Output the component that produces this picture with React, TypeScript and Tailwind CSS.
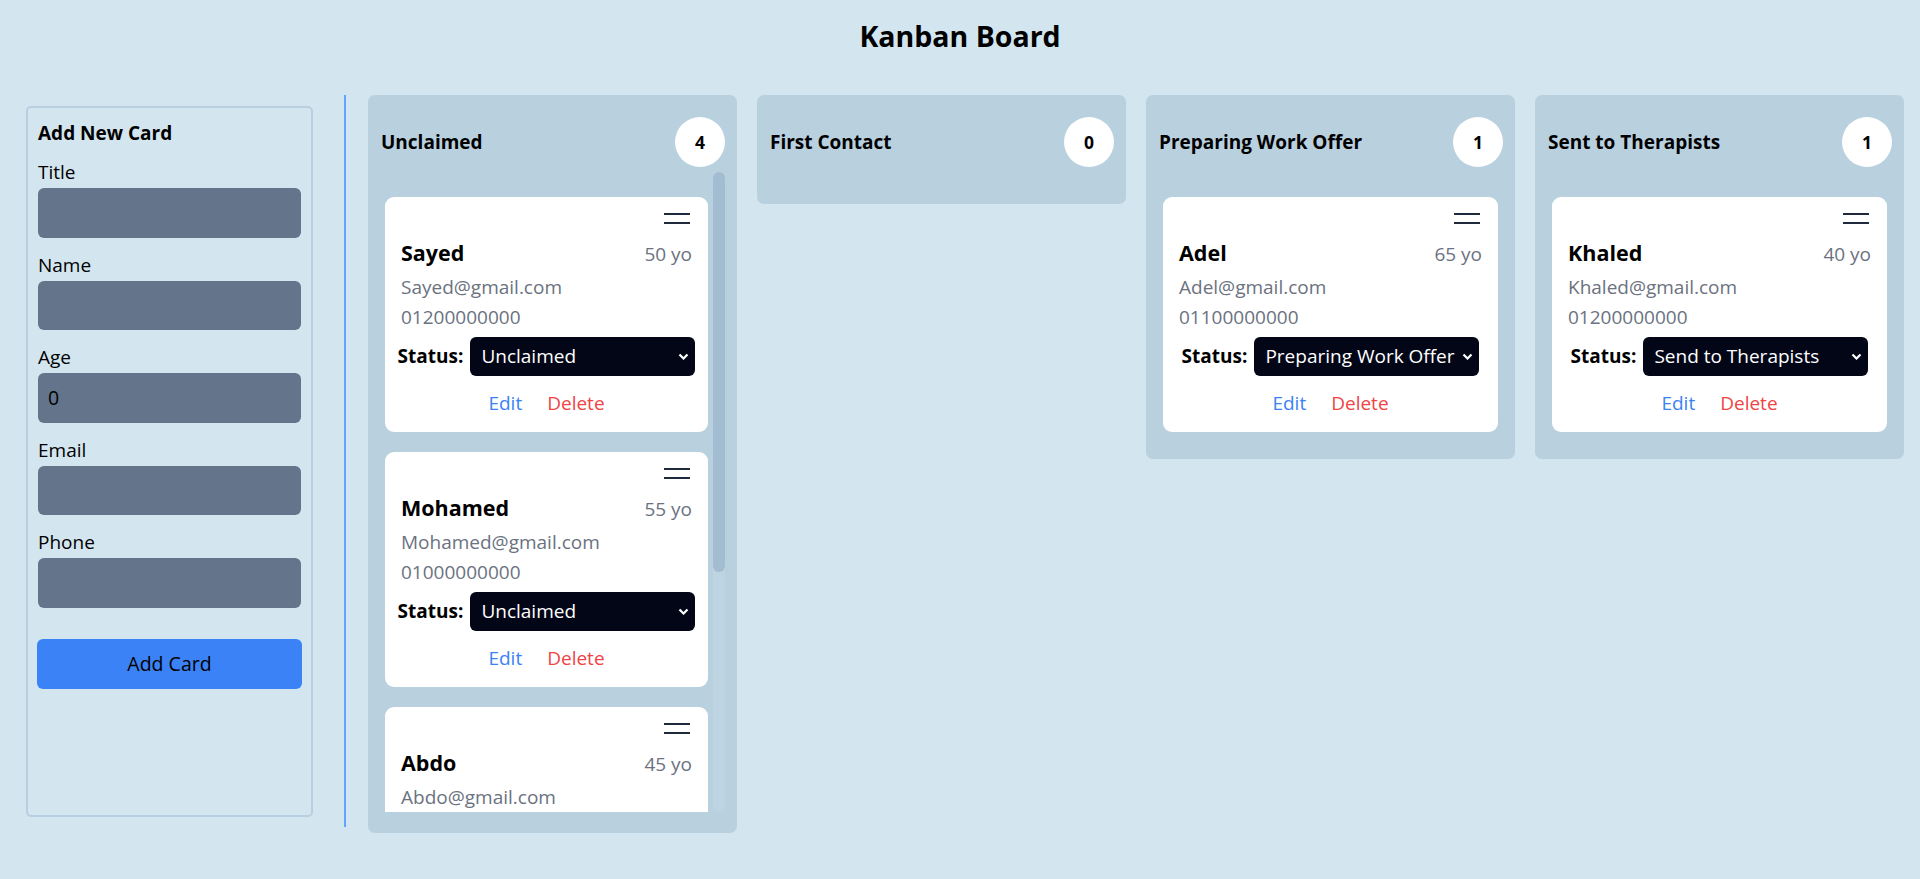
import React from "react";

type Card = {
  name: string;
  age: number;
  email: string;
  phone: string;
  status: string;
};

type Column = {
  title: string;
  count: number;
  cards: Card[];
  scroll?: boolean;
};

const STATUSES = ["Unclaimed", "First Contact", "Preparing Work Offer", "Send to Therapists"];

const columns: Column[] = [
  {
    title: "Unclaimed",
    count: 4,
    scroll: true,
    cards: [
      { name: "Sayed", age: 50, email: "Sayed@gmail.com", phone: "01200000000", status: "Unclaimed" },
      { name: "Mohamed", age: 55, email: "Mohamed@gmail.com", phone: "01000000000", status: "Unclaimed" },
      { name: "Abdo", age: 45, email: "Abdo@gmail.com", phone: "01100000000", status: "Unclaimed" },
      { name: "Ali", age: 30, email: "Ali@gmail.com", phone: "01500000000", status: "Unclaimed" },
    ],
  },
  { title: "First Contact", count: 0, cards: [] },
  {
    title: "Preparing Work Offer",
    count: 1,
    cards: [
      { name: "Adel", age: 65, email: "Adel@gmail.com", phone: "01100000000", status: "Preparing Work Offer" },
    ],
  },
  {
    title: "Sent to Therapists",
    count: 1,
    cards: [
      { name: "Khaled", age: 40, email: "Khaled@gmail.com", phone: "01200000000", status: "Send to Therapists" },
    ],
  },
];

function Handle() {
  return (
    <svg width="26" height="11" viewBox="0 0 26 11" className="block">
      <line x1="0" y1="1" x2="26" y2="1" stroke="#1e293b" strokeWidth="2" />
      <line x1="0" y1="10" x2="26" y2="10" stroke="#1e293b" strokeWidth="2" />
    </svg>
  );
}

function KanbanCard({ card }: { card: Card }) {
  return (
    <div className="bg-white rounded-[9px] pt-4 px-4 pb-[14px] mb-5 shrink-0">
      <div className="flex justify-end pr-[2px]">
        <Handle />
      </div>
      <div className="mt-[11px] flex items-baseline justify-between">
        <span className="text-[21.5px] leading-[35px] font-bold text-black">{card.name}</span>
        <span className="text-[19px] leading-[35px] text-[#6b7280]">{card.age} yo</span>
      </div>
      <div className="text-[19px] leading-[30px] text-[#6b7280]">{card.email}</div>
      <div className="text-[19px] leading-[30px] text-[#6b7280]">{card.phone}</div>
      <div className="mt-[5px] flex items-center justify-center gap-[7px]">
        <span className="text-[19px] font-bold text-black whitespace-nowrap">Status:</span>
        <div className="relative w-[225px] h-[39px] shrink-0">
          <select
            defaultValue={card.status}
            className="appearance-none w-full h-full bg-[#030617] text-white rounded-[6px] pl-[11px] pr-6 text-[19px] outline-none"
          >
            {STATUSES.map((s) => (
              <option key={s} value={s}>
                {s}
              </option>
            ))}
          </select>
          <svg
            width="11"
            height="7"
            viewBox="0 0 11 7"
            className="absolute right-[6px] top-[16px] pointer-events-none"
          >
            <polyline points="1.5,1.5 5.5,5.5 9.5,1.5" fill="none" stroke="white" strokeWidth="2.2" />
          </svg>
        </div>
      </div>
      <div className="mt-[12px] flex justify-center gap-[25px] text-[19px] leading-[30px]">
        <button className="text-[#3b82f6]">Edit</button>
        <button className="text-[#ef4444]">Delete</button>
      </div>
    </div>
  );
}

function KanbanColumn({ col }: { col: Column }) {
  return (
    <div className={`w-[369px] shrink-0 bg-[#b9d0df] rounded-[7px] pt-[22px] px-3 ${col.scroll ? "pb-[21px]" : "pb-[7px]"}`}>
      <div className="h-[50px] flex items-center justify-between">
        <span className="text-[19px] font-bold text-black pl-px">{col.title}</span>
        <span className="w-[50px] h-[50px] rounded-full bg-white flex items-center justify-center text-[17.5px] font-bold text-black">
          {col.count}
        </span>
      </div>
      {col.scroll ? (
        <div className="mt-[5px] flex h-[640px]">
          <div className="flex-1 overflow-hidden px-[5px] pt-[25px] flex flex-col">
            {col.cards.map((c) => (
              <KanbanCard key={c.name} card={c} />
            ))}
          </div>
          <div className="w-[12px] h-full rounded-full bg-[#bfd4e2] shrink-0">
            <div className="w-full h-[400px] rounded-full bg-[#a2bdd2]" />
          </div>
        </div>
      ) : (
        <div className="mt-[5px] px-[5px] pt-[25px]">
          {col.cards.map((c) => (
            <KanbanCard key={c.name} card={c} />
          ))}
        </div>
      )}
    </div>
  );
}

function Field({ label, value }: { label: string; value?: string }) {
  return (
    <div className="mb-[12px]">
      <div className="text-[19px] leading-[30px] text-black">{label}</div>
      <input
        readOnly
        value={value ?? ""}
        className="mt-px w-full h-[49.5px] bg-[#64748b] rounded-[6px] pl-[10px] text-[19.5px] text-black outline-none"
      />
    </div>
  );
}

export default function App() {
  return (
    <div className="w-full h-[879px] bg-[#d3e5ee] font-['Open_Sans',sans-serif] overflow-hidden">
      <h1 className="h-[95px] pt-[16px] text-center text-[28.5px] leading-[40px] font-bold text-black">
        Kanban Board
      </h1>
      <div className="flex items-start">
        <div className="ml-[26px] mt-[11px] w-[287px] h-[711px] border-2 border-[#b8cfe0] rounded-[5px] pt-[10px] px-[10px]">
          <div className="text-[19px] leading-[30px] font-bold text-black mb-[9px]">Add New Card</div>
          <Field label="Title" />
          <Field label="Name" />
          <Field label="Age" value="0" />
          <Field label="Email" />
          <Field label="Phone" />
          <button className="mt-[19px] -ml-px w-[265px] h-[50px] bg-[#3b82f6] rounded-[6px] text-[19.5px] text-black">
            Add Card
          </button>
        </div>
        <div className="ml-[31px] w-[2px] h-[732px] bg-[#60a5fa]" />
        <div className="ml-[22px] flex gap-5 items-start">
          {columns.map((c) => (
            <KanbanColumn key={c.title} col={c} />
          ))}
        </div>
      </div>
    </div>
  );
}
